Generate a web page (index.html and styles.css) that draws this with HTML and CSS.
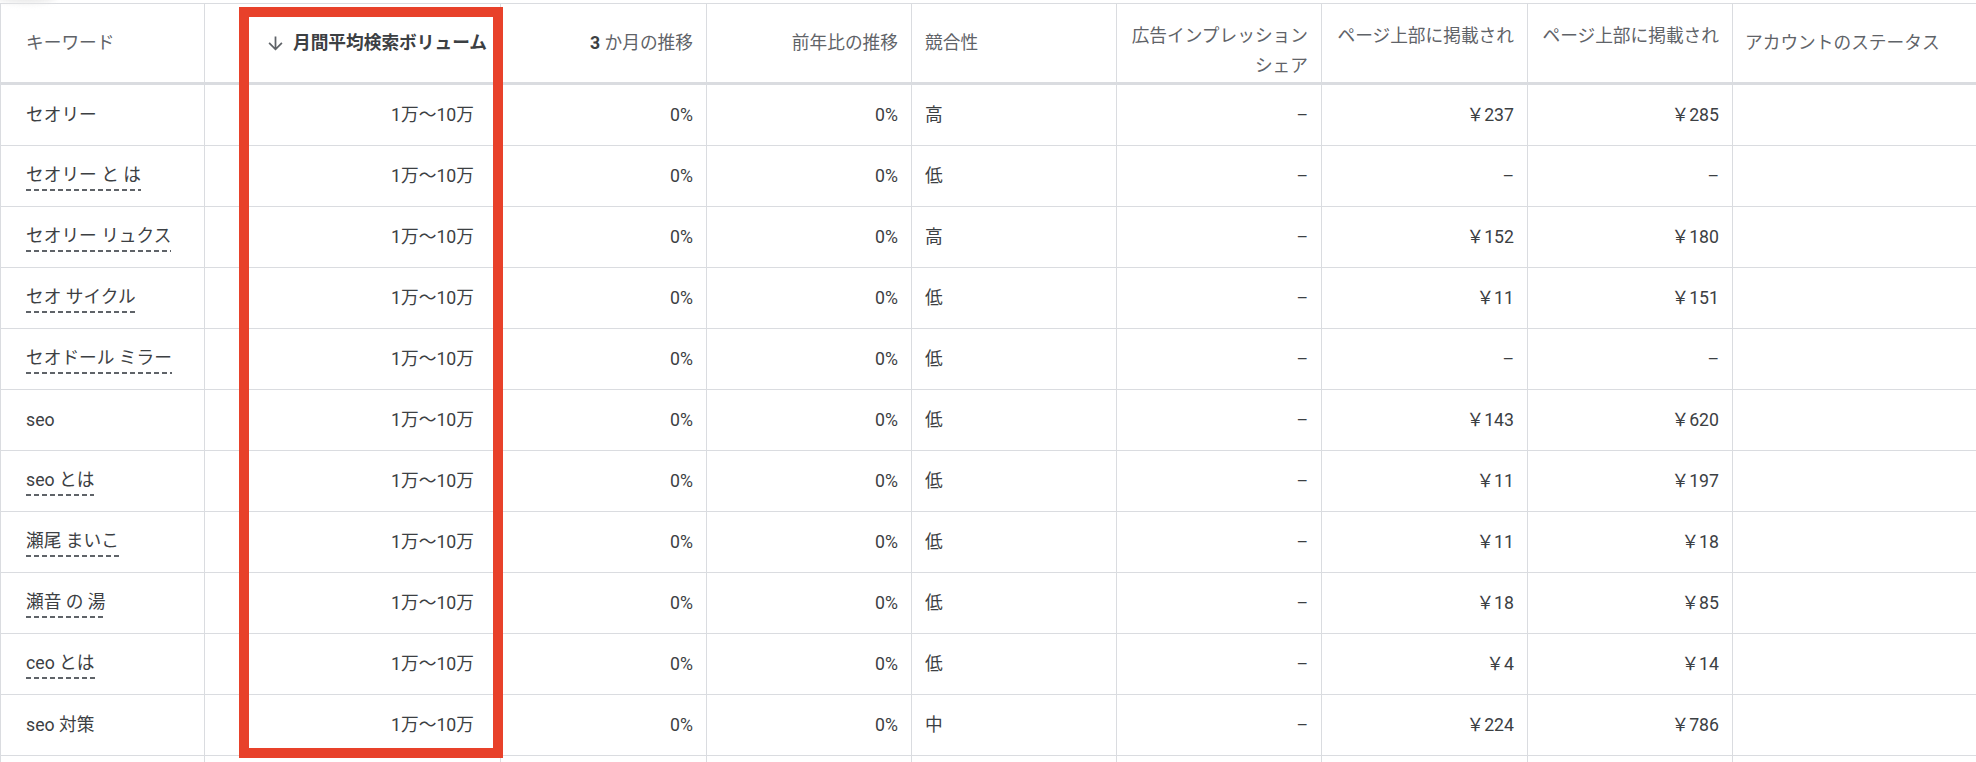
FILE: index.html
```html
<!DOCTYPE html>
<html lang="ja">
<head>
<meta charset="utf-8">
<title>キーワード候補</title>
<link rel="stylesheet" href="styles.css">
</head>
<body>
<div class="page">
  <div class="blob"></div>
  <div class="table">
    <div class="row head">
      <div class="cell kw">キーワード</div>
      <div class="cell r sorted"><svg class="sort" viewBox="0 0 24 24"><path d="M20 12l-1.41-1.41L13 16.17V4h-2v12.17l-5.58-5.59L4 12l8 8 8-8z"/></svg><span>月間平均検索ボリューム</span></div>
      <div class="cell r"><span class="num">3</span>&nbsp;か月の推移</div>
      <div class="cell r">前年比の推移</div>
      <div class="cell">競合性</div>
      <div class="cell r"><span class="two">広告インプレッション<br>シェア</span></div>
      <div class="cell r"><span class="two">ページ上部に掲載され</span></div>
      <div class="cell r"><span class="two">ページ上部に掲載され</span></div>
      <div class="cell st">アカウントのステータス</div>
    </div>

    <div class="row">
      <div class="cell kw">セオリー</div>
      <div class="cell r vol">1万～10万</div>
      <div class="cell r">0%</div>
      <div class="cell r">0%</div>
      <div class="cell">高</div>
      <div class="cell r">–</div>
      <div class="cell r">￥237</div>
      <div class="cell r">￥285</div>
      <div class="cell st"></div>
    </div>
    <div class="row">
      <div class="cell kw"><span class="u">セオリー と は</span></div>
      <div class="cell r vol">1万～10万</div>
      <div class="cell r">0%</div>
      <div class="cell r">0%</div>
      <div class="cell">低</div>
      <div class="cell r">–</div>
      <div class="cell r">–</div>
      <div class="cell r">–</div>
      <div class="cell st"></div>
    </div>
    <div class="row">
      <div class="cell kw"><span class="u">セオリー リュクス</span></div>
      <div class="cell r vol">1万～10万</div>
      <div class="cell r">0%</div>
      <div class="cell r">0%</div>
      <div class="cell">高</div>
      <div class="cell r">–</div>
      <div class="cell r">￥152</div>
      <div class="cell r">￥180</div>
      <div class="cell st"></div>
    </div>
    <div class="row">
      <div class="cell kw"><span class="u">セオ サイクル</span></div>
      <div class="cell r vol">1万～10万</div>
      <div class="cell r">0%</div>
      <div class="cell r">0%</div>
      <div class="cell">低</div>
      <div class="cell r">–</div>
      <div class="cell r">￥11</div>
      <div class="cell r">￥151</div>
      <div class="cell st"></div>
    </div>
    <div class="row">
      <div class="cell kw"><span class="u">セオドール ミラー</span></div>
      <div class="cell r vol">1万～10万</div>
      <div class="cell r">0%</div>
      <div class="cell r">0%</div>
      <div class="cell">低</div>
      <div class="cell r">–</div>
      <div class="cell r">–</div>
      <div class="cell r">–</div>
      <div class="cell st"></div>
    </div>
    <div class="row">
      <div class="cell kw">seo</div>
      <div class="cell r vol">1万～10万</div>
      <div class="cell r">0%</div>
      <div class="cell r">0%</div>
      <div class="cell">低</div>
      <div class="cell r">–</div>
      <div class="cell r">￥143</div>
      <div class="cell r">￥620</div>
      <div class="cell st"></div>
    </div>
    <div class="row">
      <div class="cell kw"><span class="u">seo とは</span></div>
      <div class="cell r vol">1万～10万</div>
      <div class="cell r">0%</div>
      <div class="cell r">0%</div>
      <div class="cell">低</div>
      <div class="cell r">–</div>
      <div class="cell r">￥11</div>
      <div class="cell r">￥197</div>
      <div class="cell st"></div>
    </div>
    <div class="row">
      <div class="cell kw"><span class="u">瀬尾 まいこ</span></div>
      <div class="cell r vol">1万～10万</div>
      <div class="cell r">0%</div>
      <div class="cell r">0%</div>
      <div class="cell">低</div>
      <div class="cell r">–</div>
      <div class="cell r">￥11</div>
      <div class="cell r">￥18</div>
      <div class="cell st"></div>
    </div>
    <div class="row">
      <div class="cell kw"><span class="u">瀬音 の 湯</span></div>
      <div class="cell r vol">1万～10万</div>
      <div class="cell r">0%</div>
      <div class="cell r">0%</div>
      <div class="cell">低</div>
      <div class="cell r">–</div>
      <div class="cell r">￥18</div>
      <div class="cell r">￥85</div>
      <div class="cell st"></div>
    </div>
    <div class="row">
      <div class="cell kw"><span class="u">ceo とは</span></div>
      <div class="cell r vol">1万～10万</div>
      <div class="cell r">0%</div>
      <div class="cell r">0%</div>
      <div class="cell">低</div>
      <div class="cell r">–</div>
      <div class="cell r">￥4</div>
      <div class="cell r">￥14</div>
      <div class="cell st"></div>
    </div>
    <div class="row">
      <div class="cell kw">seo 対策</div>
      <div class="cell r vol">1万～10万</div>
      <div class="cell r">0%</div>
      <div class="cell r">0%</div>
      <div class="cell">中</div>
      <div class="cell r">–</div>
      <div class="cell r">￥224</div>
      <div class="cell r">￥786</div>
      <div class="cell st"></div>
    </div>
    <div class="row">
      <div class="cell kw"></div>
      <div class="cell r vol"></div>
      <div class="cell r"></div>
      <div class="cell r"></div>
      <div class="cell"></div>
      <div class="cell r"></div>
      <div class="cell r"></div>
      <div class="cell r"></div>
      <div class="cell st"></div>
    </div>
  </div>
  <div class="highlight"></div>
</div>
</body>
</html>
```

FILE: styles.css
```css
* { box-sizing: border-box; }

html, body {
  margin: 0;
  padding: 0;
  background: #ffffff;
}

body {
  font-family: Roboto, "Noto Sans CJK JP", sans-serif;
  font-size: 17.7px;
  color: #3c4043;
  overflow: hidden;
}

.page {
  position: relative;
  width: 1976px;
  height: 762px;
  overflow: hidden;
}

.blob {
  position: absolute;
  left: -6px;
  top: -14px;
  width: 64px;
  height: 17px;
  border-radius: 50%;
  background: #e8e8e8;
  filter: blur(3px);
}

.table {
  margin-top: 3px;
  border-top: 1px solid #dadce0;
  border-left: 1px solid #dadce0;
}

.row {
  display: grid;
  grid-template-columns: 204px 296px 206px 205px 205px 205px 206px 205px 1fr;
  height: 61px;
  border-bottom: 1px solid #dadce0;
}

.row.head {
  height: 81px;
  border-bottom: 3px solid #dadce0;
  color: #5f6368;
}

.cell {
  display: flex;
  align-items: center;
  padding: 0 13px;
  border-right: 1px solid #dadce0;
  white-space: nowrap;
  line-height: 26px;
  overflow: hidden;
}

.cell:last-child {
  border-right: none;
}

.r {
  justify-content: flex-end;
  text-align: right;
}

.kw {
  padding-left: 25px;
}

.vol {
  padding-right: 26px;
}

.st {
  padding-left: 12px;
}

.sorted {
  font-weight: 700;
  color: #3c4043;
}

.num {
  font-weight: 700;
  color: #3c4043;
}

.sort {
  width: 21px;
  height: 21px;
  fill: #5f6368;
  margin-right: 7px;
  flex: none;
}

.two {
  display: block;
  height: 56px;
  line-height: 30px;
  padding-top: 6px;
}

.u {
  padding-bottom: 3px;
  background-image: linear-gradient(to right, #5f6368 0 5px, transparent 5px 8px);
  background-size: 8px 2px;
  background-repeat: repeat-x;
  background-position: 0 100%;
}

.highlight {
  position: absolute;
  left: 239px;
  top: 7px;
  width: 264px;
  height: 751px;
  border: 10px solid #e8412a;
  pointer-events: none;
}
```
